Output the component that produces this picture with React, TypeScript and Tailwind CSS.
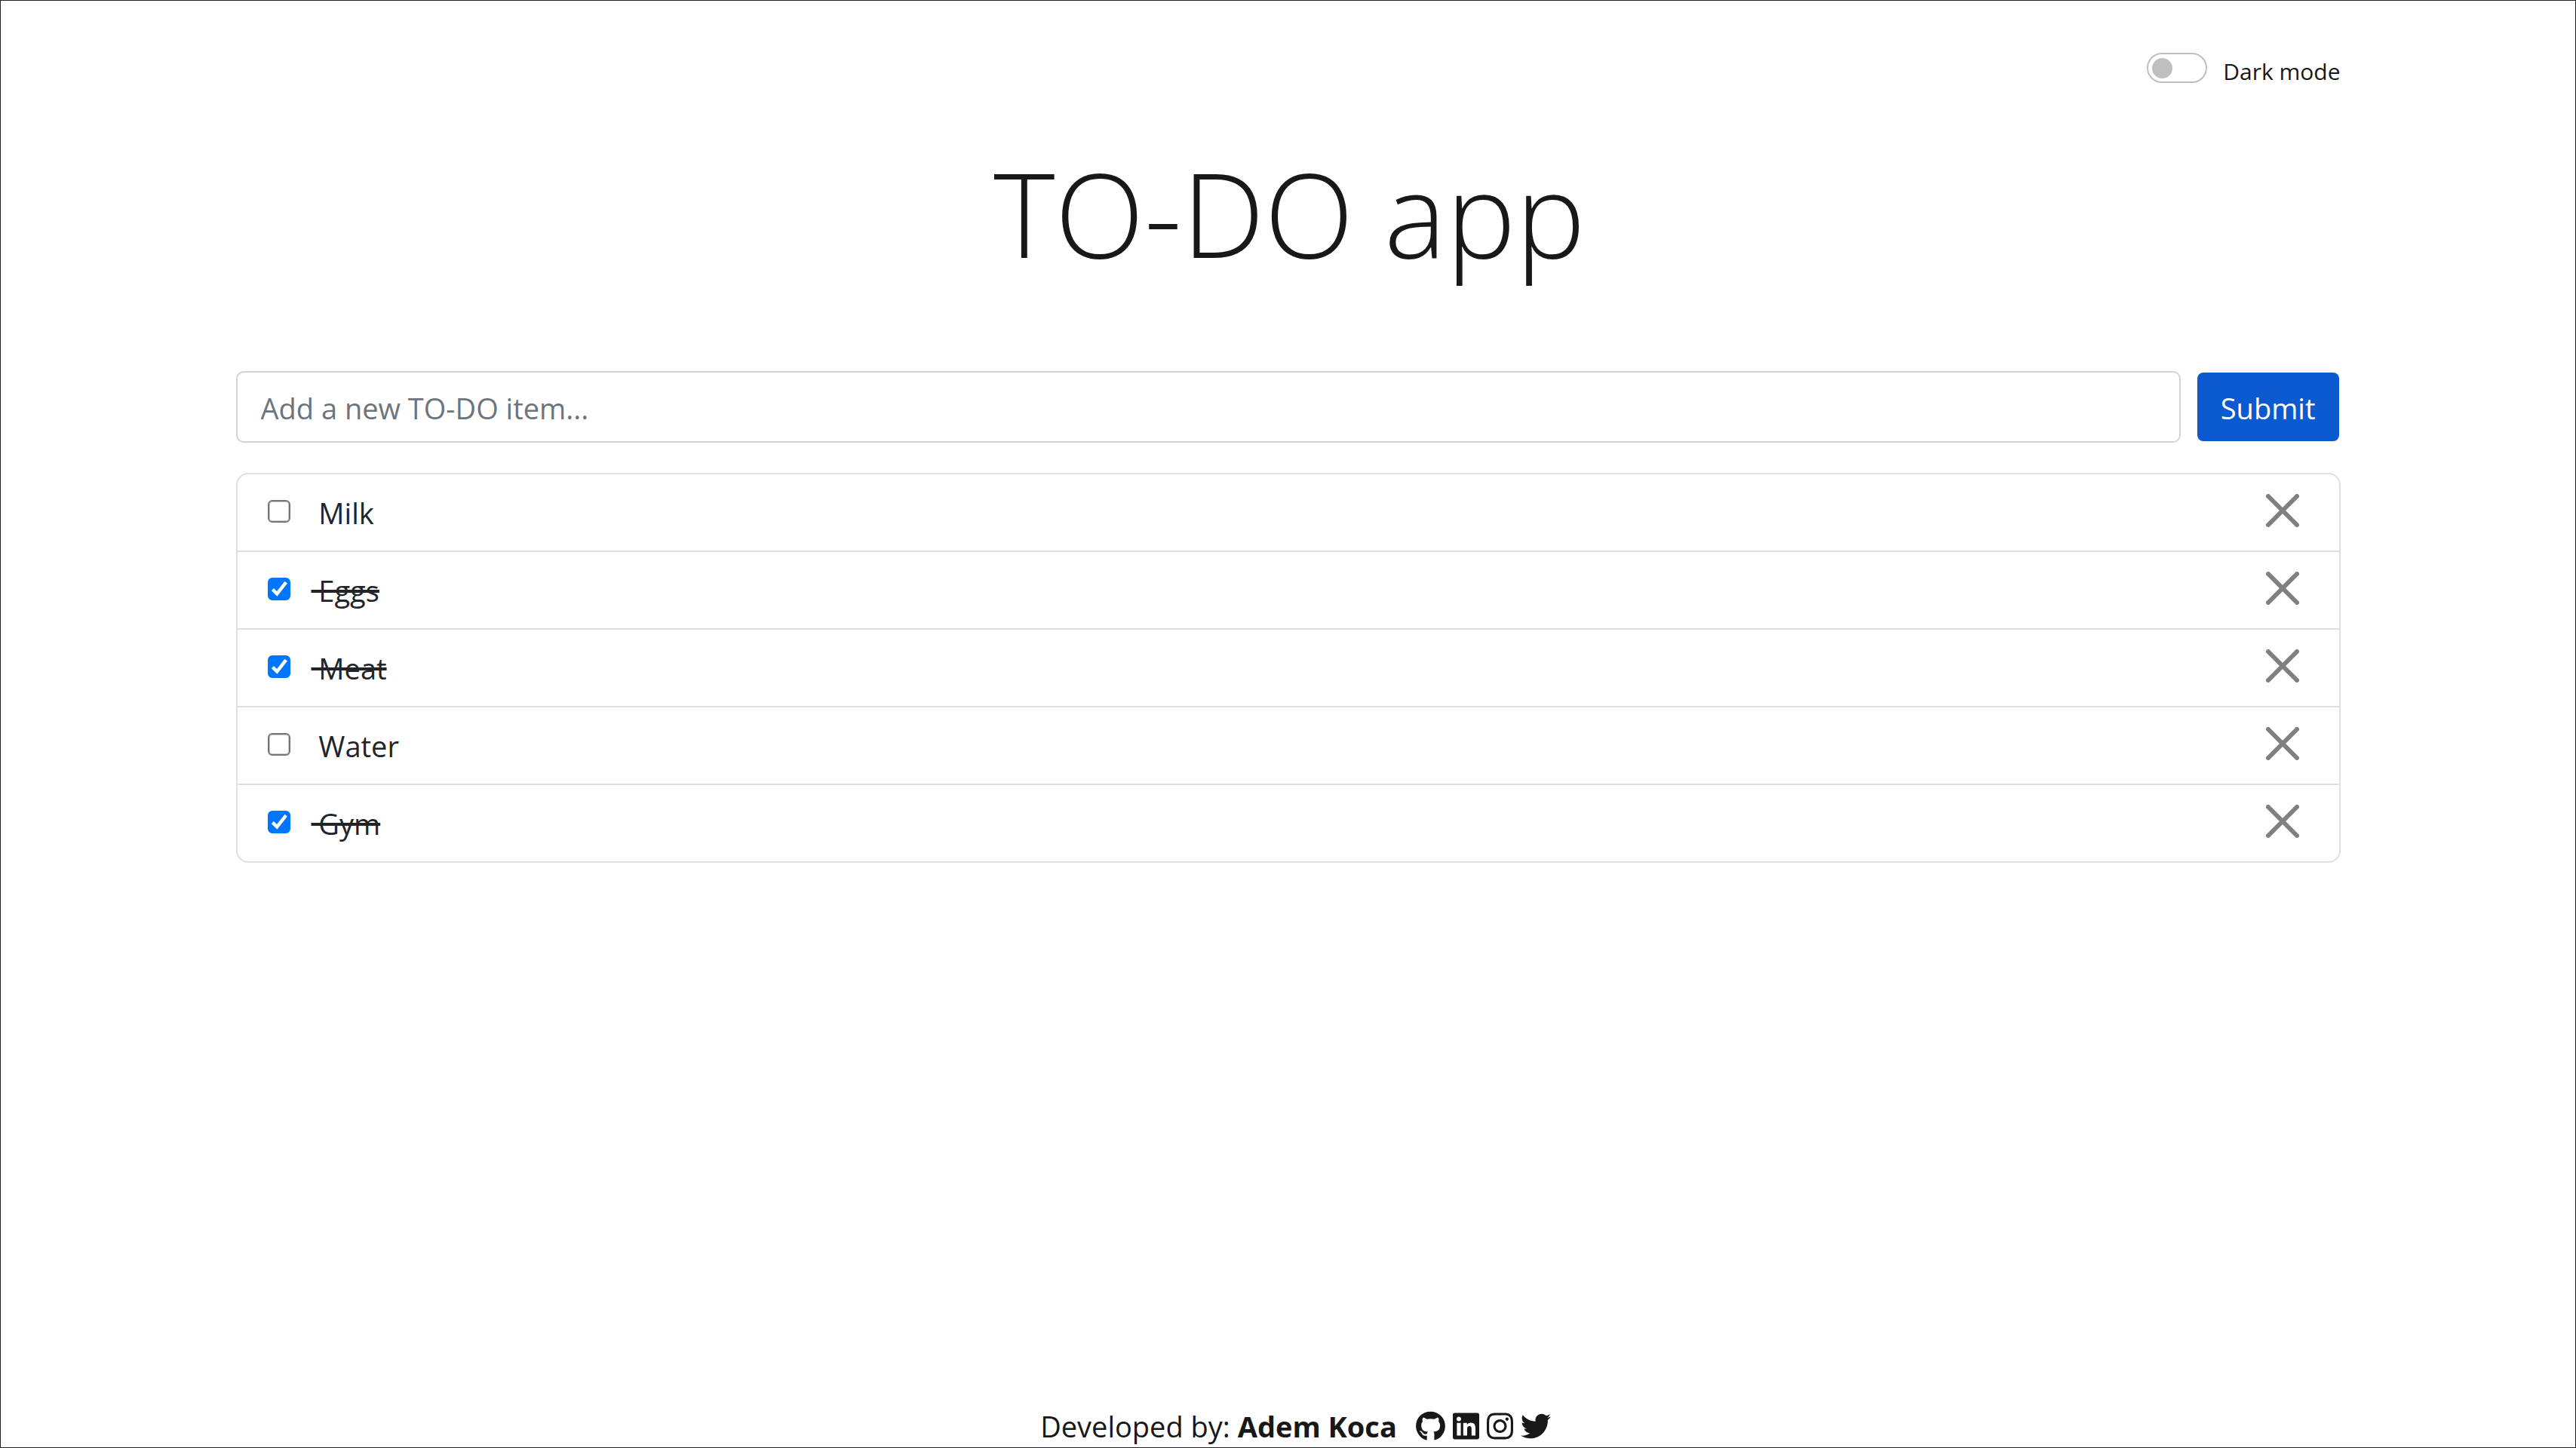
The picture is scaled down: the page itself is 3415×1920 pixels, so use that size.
import { useState } from "react";
import { FaGithub, FaInstagram, FaLinkedin, FaTwitter } from "react-icons/fa";

type Todo = { id: number; text: string; done: boolean };

const initialTodos: Todo[] = [
  { id: 1, text: "Milk", done: false },
  { id: 2, text: "Eggs", done: true },
  { id: 3, text: "Meat", done: true },
  { id: 4, text: "Water", done: false },
  { id: 5, text: "Gym", done: true },
];

function DarkModeSwitch() {
  return (
    <div className="flex items-start justify-end gap-[21px]">
      <input
        id="dark-mode"
        type="checkbox"
        role="switch"
        className="h-10 w-20 appearance-none rounded-full border-2 border-[#bfbfbf] p-[5px] before:block before:size-[27px] before:rounded-full before:bg-[#bfbfbf] checked:before:ml-auto"
      />
      <label htmlFor="dark-mode" className="text-[30px] leading-[50px]">
        Dark mode
      </label>
    </div>
  );
}

function TodoRow({ todo, onToggle, onRemove }: { todo: Todo; onToggle: () => void; onRemove: () => void }) {
  const id = `todo-${todo.id}`;
  return (
    <li className="flex items-center pt-[21px] pr-[53px] pb-5 pl-10 text-[#212529]">
      <span className="relative mb-1 size-[30px]">
        <input
          id={id}
          type="checkbox"
          checked={todo.done}
          onChange={onToggle}
          className="peer block size-[30px] appearance-none rounded-[6px] border-2 border-[#767676] shadow-[inset_0_0_0_1px_#c8c8c8] checked:border-[#0075ff] checked:bg-[#0075ff] checked:shadow-none"
        />
        <svg viewBox="0 0 30 30" className="pointer-events-none absolute inset-0 hidden size-[30px] peer-checked:block">
          <path d="M6.4 15.6 12.2 21.4 24.2 6.2" fill="none" stroke="#fff" strokeWidth="4.4" />
        </svg>
      </span>
      <label htmlFor={id} className="ml-7 grow leading-[60px]">
        <span className={todo.done ? "line-through decoration-4 [text-decoration-skip-ink:none]" : ""}>
          {"\u00a0" + todo.text}
        </span>
      </label>
      <button type="button" aria-label={`Remove ${todo.text}`} onClick={onRemove} className="mb-[6px]">
        <svg viewBox="0 0 44 44" className="size-11">
          <path d="M3 3 41 41M41 3 3 41" fill="none" stroke="#808080" strokeWidth="6" strokeLinecap="round" />
        </svg>
      </button>
    </li>
  );
}

export default function App() {
  const [todos, setTodos] = useState(initialTodos);
  const [draft, setDraft] = useState("");

  const add = () => {
    if (!draft.trim()) return;
    setTodos([...todos, { id: Date.now(), text: draft.trim(), done: false }]);
    setDraft("");
  };

  return (
    <div className="flex min-h-screen flex-col items-center border border-[#222] bg-white font-['Open_Sans','Noto_Sans',sans-serif] text-[38px] text-[#181818]">
      <main className="w-full max-w-[2790px] grow pt-[69px]">
        <DarkModeSwitch />
        <h1 className="mt-[68px] pl-1 text-center text-[155px] leading-[188px] font-light">TO-DO app</h1>
        <form
          className="mt-[116px] flex items-center gap-[22px] pr-[2px]"
          onSubmit={(e) => {
            e.preventDefault();
            add();
          }}
        >
          <input
            type="text"
            aria-label="New item"
            placeholder="Add a new TO-DO item..."
            value={draft}
            onChange={(e) => setDraft(e.target.value)}
            className="min-w-0 grow rounded-[10px] border-2 border-[#ced4da] px-[31px] pt-[17px] pb-[14px] leading-[60px] placeholder:text-[#6c757d]"
          />
          <button
            type="submit"
            className="rounded-lg bg-[#0b5acf] px-[31px] pt-[17px] pb-[14px] leading-[60px] text-white"
          >
            Submit
          </button>
        </form>
        <ul className="mt-10 divide-y-2 divide-[#dfdfdf] rounded-2xl border-2 border-[#dfdfdf]">
          {todos.map((todo) => (
            <TodoRow
              key={todo.id}
              todo={todo}
              onToggle={() => setTodos(todos.map((t) => (t.id === todo.id ? { ...t, done: !t.done } : t)))}
              onRemove={() => setTodos(todos.filter((t) => t.id !== todo.id))}
            />
          ))}
        </ul>
      </main>
      <footer className="flex items-center pl-5 leading-[56px]">
        <p>
          Developed by: <strong className="font-bold">Adem Koca</strong>
        </p>
        <nav className="ml-[25px] flex items-center gap-[10px]">
          <a href="#github" aria-label="GitHub">
            <FaGithub className="h-10 w-[39px]" />
          </a>
          <a href="#linkedin" aria-label="LinkedIn">
            <FaLinkedin className="h-10 w-[35px]" />
          </a>
          <a href="#instagram" aria-label="Instagram">
            <FaInstagram className="h-10 w-[35px]" />
          </a>
          <a href="#twitter" aria-label="Twitter">
            <FaTwitter className="size-10" />
          </a>
        </nav>
      </footer>
    </div>
  );
}
